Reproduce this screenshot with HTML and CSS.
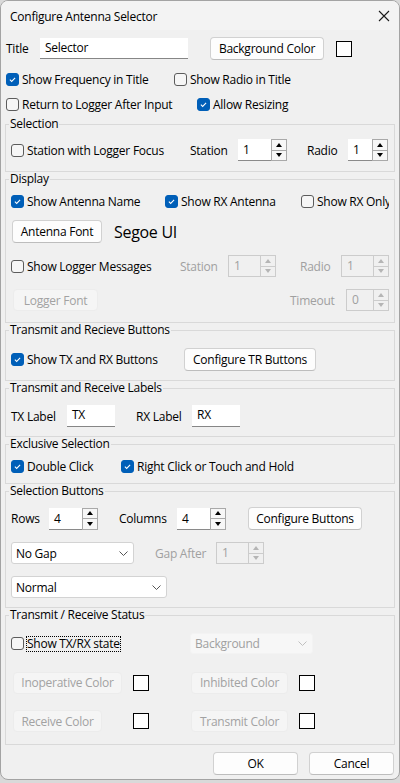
FILE: index.html
```html
<!DOCTYPE html>
<html>
<head>
<meta charset="utf-8">
<title>Configure Antenna Selector</title>
<link rel="stylesheet" href="styles.css">
</head>
<body>
<div class="window">
  <div class="titlebar">
    <span class="title">Configure Antenna Selector</span>
    <svg class="close" width="12" height="12" viewBox="0 0 12 12"><path d="M1 1L11 11M11 1L1 11" stroke="#1b1b1b" stroke-width="1.1" fill="none"/></svg>
  </div>
  <div class="content">
    <div class="row top h23 mt7">
      <span class="lbl w34">Title</span>
      <div class="tinput w148">Selector</div>
      <button class="btn w114 ml22">Background Color</button>
      <span class="swatch ml12"></span>
    </div>
    <div class="row top h16 mt11">
      <label class="cb w168"><span class="box on"><svg viewBox="0 0 13 13"><path d="M3.4 6.7L5.5 8.8L9.6 4.5" /></svg></span><span>Show Frequency in Title</span></label>
      <label class="cb"><span class="box"></span><span>Show Radio in Title</span></label>
    </div>
    <div class="row top h16 mt9">
      <label class="cb w191"><span class="box"></span><span>Return to Logger After Input</span></label>
      <label class="cb"><span class="box on"><svg viewBox="0 0 13 13"><path d="M3.4 6.7L5.5 8.8L9.6 4.5" /></svg></span><span>Allow Resizing</span></label>
    </div>

    <fieldset class="group g-sel">
      <legend>Selection</legend>
      <div class="row h22 mt8">
        <label class="cb w179"><span class="box"></span><span>Station with Logger Focus</span></label>
        <span class="lbl w48">Station</span>
        <div class="spin w49"><span class="val">1</span><span class="arrows"><span class="up"><i></i></span><span class="down"><i></i></span></span></div>
        <span class="lbl w41 ml20">Radio</span>
        <div class="spin w40"><span class="val">1</span><span class="arrows"><span class="up"><i></i></span><span class="down"><i></i></span></span></div>
      </div>
    </fieldset>

    <fieldset class="group g-disp">
      <legend>Display</legend>
      <div class="row h16 mt7 clip">
        <label class="cb w154"><span class="box on"><svg viewBox="0 0 13 13"><path d="M3.4 6.7L5.5 8.8L9.6 4.5" /></svg></span><span>Show Antenna Name</span></label>
        <label class="cb w136"><span class="box on"><svg viewBox="0 0 13 13"><path d="M3.4 6.7L5.5 8.8L9.6 4.5" /></svg></span><span>Show RX Antenna</span></label>
        <label class="cb nowrap"><span class="box"></span><span>Show RX Only</span></label>
      </div>
      <div class="row h23 mt11">
        <button class="btn w90 ml1">Antenna Font</button>
        <span class="fontname">Segoe UI</span>
      </div>
      <div class="row h22 mt12">
        <label class="cb w169"><span class="box"></span><span>Show Logger Messages</span></label>
        <span class="lbl dis w48">Station</span>
        <div class="spin dis w48"><span class="val">1</span><span class="arrows"><span class="up"><i></i></span><span class="down"><i></i></span></span></div>
        <span class="lbl dis w41 ml24">Radio</span>
        <div class="spin dis w48"><span class="val">1</span><span class="arrows"><span class="up"><i></i></span><span class="down"><i></i></span></span></div>
      </div>
      <div class="row h22 mt12">
        <button class="btn dis w85 ml2">Logger Font</button>
        <span class="spacer"></span>
        <span class="lbl dis w56">Timeout</span>
        <div class="spin dis w43"><span class="val">0</span><span class="arrows"><span class="up"><i></i></span><span class="down"><i></i></span></span></div>
      </div>
    </fieldset>

    <fieldset class="group g-trb">
      <legend>Transmit and Recieve Buttons</legend>
      <div class="row h23 mt11">
        <label class="cb w173"><span class="box on"><svg viewBox="0 0 13 13"><path d="M3.4 6.7L5.5 8.8L9.6 4.5" /></svg></span><span>Show TX and RX Buttons</span></label>
        <button class="btn w132">Configure TR Buttons</button>
      </div>
    </fieldset>

    <fieldset class="group g-lab">
      <legend>Transmit and Receive Labels</legend>
      <div class="row h22 mt10">
        <span class="lbl w56">TX Label</span>
        <div class="tinput w48">TX</div>
        <span class="lbl w56 ml21">RX Label</span>
        <div class="tinput w48">RX</div>
      </div>
    </fieldset>

    <fieldset class="group g-exc">
      <legend>Exclusive Selection</legend>
      <div class="row h16 mt7">
        <label class="cb w110"><span class="box on"><svg viewBox="0 0 13 13"><path d="M3.4 6.7L5.5 8.8L9.6 4.5" /></svg></span><span>Double Click</span></label>
        <label class="cb"><span class="box on"><svg viewBox="0 0 13 13"><path d="M3.4 6.7L5.5 8.8L9.6 4.5" /></svg></span><span>Right Click or Touch and Hold</span></label>
      </div>
    </fieldset>

    <fieldset class="group g-sb">
      <legend>Selection Buttons</legend>
      <div class="row h23 mt9">
        <span class="lbl w38">Rows</span>
        <div class="spin w49"><span class="val">4</span><span class="arrows"><span class="up"><i></i></span><span class="down"><i></i></span></span></div>
        <span class="lbl w58 ml21">Columns</span>
        <div class="spin w49"><span class="val">4</span><span class="arrows"><span class="up"><i></i></span><span class="down"><i></i></span></span></div>
        <button class="btn w114 ml22">Configure Buttons</button>
      </div>
      <div class="row h22 mt12">
        <div class="combo w123"><span>No Gap</span><svg class="chev" width="9" height="5" viewBox="0 0 9 5"><path d="M0.5 0.5L4.5 4.5L8.5 0.5" /></svg></div>
        <span class="lbl dis w61 ml21">Gap After</span>
        <div class="spin dis w48"><span class="val">1</span><span class="arrows"><span class="up"><i></i></span><span class="down"><i></i></span></span></div>
      </div>
      <div class="row h22 mt12">
        <div class="combo w156"><span>Normal</span><svg class="chev" width="9" height="5" viewBox="0 0 9 5"><path d="M0.5 0.5L4.5 4.5L8.5 0.5" /></svg></div>
      </div>
    </fieldset>

    <fieldset class="group g-st">
      <legend>Transmit / Receive Status</legend>
      <div class="row h21 mt11">
        <label class="cb w179"><span class="box"></span><span class="focus">Show TX/RX state</span></label>
        <div class="combo dis w123"><span>Background</span><svg class="chev" width="9" height="5" viewBox="0 0 9 5"><path d="M0.5 0.5L4.5 4.5L8.5 0.5" /></svg></div>
      </div>
      <div class="row h23 mt17">
        <button class="btn dis w109 ml2">Inoperative Color</button>
        <span class="swatch ml11"></span>
        <button class="btn dis w97 ml42">Inhibited Color</button>
        <span class="swatch ml11"></span>
      </div>
      <div class="row h22 mt16">
        <button class="btn dis w89 ml2">Receive Color</button>
        <span class="swatch ml31"></span>
        <button class="btn dis w97 ml42">Transmit Color</button>
        <span class="swatch ml11"></span>
      </div>
    </fieldset>

    <div class="footer">
      <button class="btn w85">OK</button>
      <button class="btn w85">Cancel</button>
    </div>
  </div>
</div>
</body>
</html>
```

FILE: styles.css
```css
html, body {
  margin: 0;
  padding: 0;
}
body {
  background: #d9d9d9;
  width: 400px;
  height: 783px;
  overflow: hidden;
  font-family: "Open Sans", "Noto Sans", "DejaVu Sans", sans-serif;
  font-size: 12px;
  letter-spacing: -0.25px;
  color: #000;
}
.window {
  box-sizing: border-box;
  width: 400px;
  height: 780px;
  border: 1px solid #a3a3a3;
  border-radius: 8px;
  background: #f0f0f0;
  overflow: hidden;
}
.titlebar {
  height: 29px;
  display: flex;
  align-items: center;
  justify-content: space-between;
  padding: 0 9px 0 9px;
  background: #f3f3f3;
}
.title {
  font-size: 12px;
  color: #000;
  padding-top: 1px;
}
.close {
  margin-top: 1px;
}
.content {
  display: flex;
  flex-direction: column;
}
.row {
  display: flex;
  align-items: center;
  white-space: nowrap;
  flex-shrink: 0;
}
.row.top {
  padding-left: 5px;
}
.row.clip {
  overflow: hidden;
}
.h16 { height: 16px; }
.h21 { height: 21px; }
.h22 { height: 22px; }
.h23 { height: 23px; }
.mt7 { margin-top: 7px; }
.mt8 { margin-top: 8px; }
.mt9 { margin-top: 9px; }
.mt10 { margin-top: 10px; }
.mt11 { margin-top: 11px; }
.mt12 { margin-top: 12px; }
.mt16 { margin-top: 16px; }
.mt17 { margin-top: 17px; }
.ml1 { margin-left: 1px; }
.ml2 { margin-left: 2px; }
.ml11 { margin-left: 11px; }
.ml12 { margin-left: 12px; }
.ml20 { margin-left: 20px; }
.ml21 { margin-left: 21px; }
.ml22 { margin-left: 22px; }
.ml24 { margin-left: 24px; }
.ml31 { margin-left: 31px; }
.ml42 { margin-left: 42px; }
.w34 { width: 34px; }
.w38 { width: 38px; }
.w40 { width: 40px; }
.w41 { width: 41px; }
.w43 { width: 43px; }
.w48 { width: 48px; }
.w49 { width: 49px; }
.w56 { width: 56px; }
.w58 { width: 58px; }
.w61 { width: 61px; }
.w85 { width: 85px; }
.w89 { width: 89px; }
.w90 { width: 90px; }
.w97 { width: 97px; }
.w109 { width: 109px; }
.w110 { width: 110px; }
.w114 { width: 114px; }
.w123 { width: 123px; }
.w132 { width: 132px; }
.w136 { width: 136px; }
.w148 { width: 148px; }
.w154 { width: 154px; }
.w156 { width: 156px; }
.w168 { width: 168px; }
.w169 { width: 169px; }
.w173 { width: 173px; }
.w179 { width: 179px; }
.w191 { width: 191px; }

.lbl {
  flex-shrink: 0;
  display: inline-block;
}
.lbl.dis { color: #a0a0a0; }
.spacer { flex: 1; }

/* group boxes */
.group {
  margin: 0 4px;
  padding: 0 5px 0 5px;
  border: 1px solid #d9d9d9;
  border-radius: 0;
  min-width: 0;
}
.group legend {
  font-size: 12px;
  line-height: 14px;
  height: 14px;
  padding: 0 1px;
  margin-left: -2px;
}
.g-sel { padding-bottom: 10px; margin-top: 5px; }
.g-disp { padding-bottom: 11px; }
.g-trb { padding-bottom: 9px; }
.g-lab { padding-bottom: 9px; }
.g-exc { padding-bottom: 9px; }
.g-sb { padding-bottom: 9px; }
.g-st { padding-bottom: 12px; }

/* checkbox */
.cb {
  display: flex;
  align-items: center;
  flex-shrink: 0;
  height: 16px;
}
.cb .box {
  box-sizing: border-box;
  width: 13px;
  height: 13px;
  border: 1px solid #5c5c5c;
  border-radius: 3px;
  background: #f6f6f6;
  margin-right: 3px;
  flex-shrink: 0;
  display: flex;
}
.cb .box.on {
  background: #005fb8;
  border-color: #005fb8;
}
.cb .box svg {
  width: 11px;
  height: 11px;
}
.cb .box svg path {
  fill: none;
  stroke: #fff;
  stroke-width: 1.2;
}
.focus {
  outline: 1px dotted #000;
  outline-offset: 0;
  line-height: 14px;
}

/* text input */
.tinput {
  box-sizing: border-box;
  height: 22px;
  line-height: 20px;
  background: #fff;
  border-bottom: 1px solid #868686;
  padding-left: 5px;
  flex-shrink: 0;
}
.h23 .tinput { height: 21px; }

/* buttons */
.btn {
  box-sizing: border-box;
  height: 23px;
  font-family: inherit;
  font-size: 12px;
  letter-spacing: -0.25px;
  color: #000;
  background: #fdfdfd;
  border: 1px solid #d1d1d1;
  border-bottom-color: #bdbdbd;
  border-radius: 4px;
  padding: 0;
  text-align: center;
  flex-shrink: 0;
}
.btn.dis {
  height: 22px;
  background: #f5f5f5;
  border-color: #ececec;
  color: #a2a2a2;
}
.fontname {
  margin-left: 12px;
  font-size: 16px;
  letter-spacing: -0.3px;
}

/* color swatch */
.swatch {
  box-sizing: border-box;
  width: 16px;
  height: 16px;
  border: 1px solid #000;
  background: #fff;
  flex-shrink: 0;
}

/* spinner */
.spin {
  display: flex;
  height: 22px;
  flex-shrink: 0;
}
.spin .val {
  box-sizing: border-box;
  flex: 1;
  background: #fff;
  border-bottom: 1px solid #8a8a8a;
  padding-left: 5px;
  line-height: 21px;
}
.spin .arrows {
  box-sizing: border-box;
  width: 16px;
  display: flex;
  flex-direction: column;
  border: 1px solid #a9a9a9;
  background: #f7f7f7;
}
.spin .up, .spin .down {
  flex: 1;
  display: flex;
  align-items: center;
  justify-content: center;
}
.spin .up {
  border-bottom: 1px solid #a9a9a9;
}
.spin .up i {
  width: 0;
  height: 0;
  border-left: 3.5px solid transparent;
  border-right: 3.5px solid transparent;
  border-bottom: 4px solid #000;
}
.spin .down i {
  width: 0;
  height: 0;
  border-left: 3.5px solid transparent;
  border-right: 3.5px solid transparent;
  border-top: 4px solid #000;
}
.spin.dis .val {
  background: #f0f0f0;
  border: 1px solid #cccccc;
  border-right: none;
  color: #a0a0a0;
  line-height: 20px;
}
.spin.dis .arrows {
  border-color: #cccccc;
  background: #f0f0f0;
}
.spin.dis .up { border-bottom-color: #cccccc; }
.spin.dis .up i { border-bottom-color: #b5b5b5; }
.spin.dis .down i { border-top-color: #b5b5b5; }

/* combo */
.combo {
  box-sizing: border-box;
  height: 22px;
  display: flex;
  align-items: center;
  justify-content: space-between;
  background: #fff;
  border: 1px solid #d3d3d3;
  border-radius: 3px;
  padding: 0 5px 0 4px;
  flex-shrink: 0;
}
.combo .chev path {
  fill: none;
  stroke: #555;
  stroke-width: 1;
}
.combo.dis {
  height: 21px;
  background: #f7f7f7;
  border-color: #f3f3f3;
  color: #a0a0a0;
}
.combo.dis .chev path { stroke: #c0c0c0; }

/* footer */
.footer {
  display: flex;
  justify-content: flex-end;
  gap: 11px;
  margin-top: 7px;
  padding-right: 5px;
}
```
